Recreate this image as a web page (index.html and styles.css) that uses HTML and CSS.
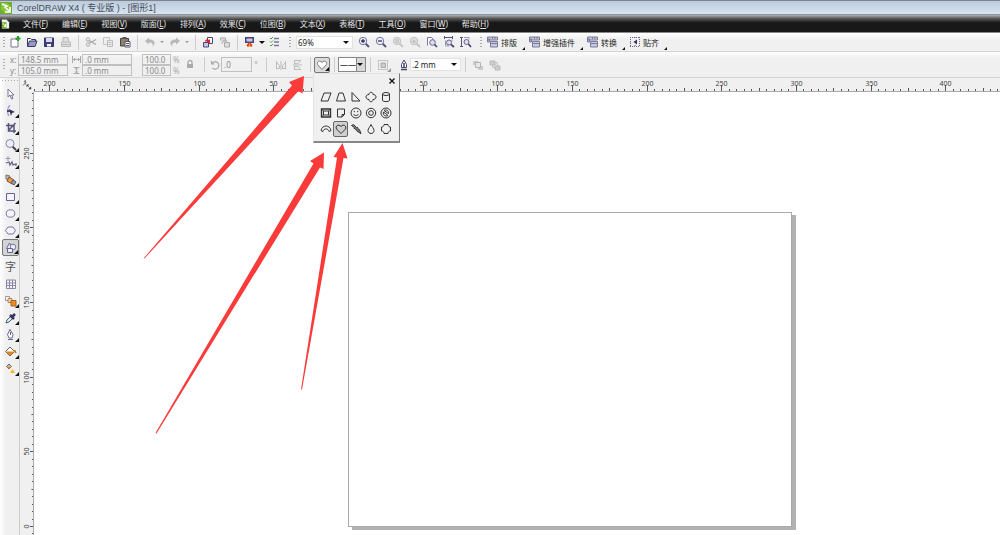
FILE: index.html
```
<!DOCTYPE html>
<html lang="zh-CN">
<head>
    <meta charset="UTF-8">
    <meta name="viewport" content="width=device-width, initial-scale=1.0">
    <title>CorelDRAW X4</title>
    <link rel="stylesheet" href="styles.css">
</head>
<body>
    <div class="app">
        <header class="titlebar">
            <svg class="logo" viewBox="0 0 12 12"><rect width="12" height="12" fill="#6fae2e"/><path d="M1 1h6l4 4v6H5L1 7z" fill="#8cc63f"/><path d="M2 2l5 2-2 1 4 4M10 5v5H5" fill="none" stroke="#fff" stroke-width="1.6"/></svg>
            <span>CorelDRAW X4 ( 专业版 ) - [图形1]</span>
        </header>

        <nav class="menubar">
            <svg class="doc-icon" viewBox="0 0 10 10"><path d="M1 0h5l3 3v7H1z" fill="#eef6e4"/><path d="M1 3h5v7H1z" fill="#6fae2e"/><path d="M2 4l3 4M5 5v3H3" stroke="#fff" fill="none"/></svg>
            <a href="#">文件(<u>F</u>)</a>
            <a href="#">编辑(<u>E</u>)</a>
            <a href="#">视图(<u>V</u>)</a>
            <a href="#">版面(<u>L</u>)</a>
            <a href="#">排列(<u>A</u>)</a>
            <a href="#">效果(<u>C</u>)</a>
            <a href="#">位图(<u>B</u>)</a>
            <a href="#">文本(<u>X</u>)</a>
            <a href="#">表格(<u>T</u>)</a>
            <a href="#">工具(<u>O</u>)</a>
            <a href="#">窗口(<u>W</u>)</a>
            <a href="#">帮助(<u>H</u>)</a>
        </nav>

        <div class="toolbar standard">
            <i class="grip"></i>
            <button class="tool" aria-label="New"><svg viewBox="0 0 12 12"><path d="M2 3h5l2 2v6H2z" fill="#fff" stroke="#77778f"/><path d="M9 0v5M6.500 2.500h5" stroke="#2da12d" stroke-width="2"/></svg></button>
            <button class="tool" aria-label="Open"><svg viewBox="0 0 12 12"><path d="M1.500 10V2.500h3l1 1h4V5" fill="#fff" stroke="#35356b"/><path d="M1.500 10.500L3.500 5H11l-2 5.500z" fill="#9a9ac0" stroke="#35356b"/></svg></button>
            <button class="tool" aria-label="Save"><svg viewBox="0 0 12 12"><path d="M1.500 2h9v8.500h-9z" fill="#44447c" stroke="#35356b"/><path d="M3 2h6v4H3z" fill="#d9d9ee"/><path d="M4 8h4v2.500H4z" fill="#fff"/></svg></button>
            <button class="tool off" aria-label="Print"><svg viewBox="0 0 12 12"><path d="M3 6V1.500h5L9 6M1.500 6h9v4.500h-9zM1.500 8.500h9" fill="#ddd" stroke="#bbb"/></svg></button>
            <i class="sep"></i>
            <button class="tool off" aria-label="Cut"><svg viewBox="0 0 12 12"><circle cx="3" cy="3.500" r="1.700" fill="none" stroke="#aaa"/><circle cx="3" cy="8.500" r="1.700" fill="none" stroke="#aaa"/><path d="M4 4.500l7 4M4 7.500l7-4" stroke="#aaa" stroke-width="1.300"/></svg></button>
            <button class="tool off" aria-label="Copy"><svg viewBox="0 0 12 12"><path d="M1.500 1.500h6v7h-6z" fill="#eee" stroke="#c4c4c4"/><path d="M5.500 4.500h5v6h-5zM6.500 6.500h3M6.500 8.500h3" fill="#eee" stroke="#bbb"/></svg></button>
            <button class="tool" aria-label="Paste"><svg viewBox="0 0 12 12"><path d="M1.500 2.500h8V10h-8z" fill="#8d8270" stroke="#4a4438"/><path d="M3.500 1h4v2h-4z" fill="#555"/><path d="M6 5.500h5V11H6zM7 7.500h3M7 9.500h3" fill="#fff" stroke="#55556e"/></svg></button>
            <i class="sep"></i>
            <button class="tool off" aria-label="Undo"><svg viewBox="0 0 12 12"><path d="M1 5l4-3.500v2c4 0 6 1.500 5.500 4.500L8.500 11C9.500 7.500 8 6.500 5 6.500v2z" fill="#b8b8bc"/></svg></button>
            <button class="drop off" aria-label="Undo list"></button>
            <button class="tool off" aria-label="Redo"><svg viewBox="0 0 12 12"><path d="M11 5L7 1.500v2C3 3.500 1 5 1.500 8l2 3C2.500 7.500 4 6.500 7 6.500v2z" fill="#b8b8bc"/></svg></button>
            <button class="drop off" aria-label="Redo list"></button>
            <i class="sep"></i>
            <button class="tool" aria-label="Import"><svg viewBox="0 0 12 12"><path d="M5.500 1.500h5v6h-5z" fill="#fff" stroke="#44447c"/><path d="M1.500 6.500h5V11h-5z" fill="#c8c8e0" stroke="#44447c"/><path d="M3 5c1-2 3-2 4-1l1-1v4H5l1-1C5 5 4 5 3 6z" fill="#d22"/></svg></button>
            <button class="tool off" aria-label="Export"><svg viewBox="0 0 12 12"><path d="M1.500 4.500V2h5v5M5.500 6.500h5V11h-5z" fill="#ddd" stroke="#aaa"/><path d="M3 8c0-4 3-4 5-3" stroke="#bbb" stroke-width="1.500" fill="none"/></svg></button>
            <i class="sep"></i>
            <button class="tool" aria-label="Application launcher"><svg viewBox="0 0 12 12"><path d="M1 1h9v6H1z" fill="#44447c"/><path d="M2.500 2.500h6v3h-6z" fill="#c8c8e6"/><path d="M5.500 6l3 3-1 2-2-1-2 1-1-2z" fill="#e33c1e"/><path d="M5.500 8v3" stroke="#fb3"/></svg></button>
            <button class="drop" aria-label="Launcher list"></button>
            <button class="tool" aria-label="Options"><svg viewBox="0 0 12 12"><path d="M5 2.500h5M5 6h5M5 9.500h5" stroke="#77779a" stroke-width="1.500"/><path d="M1 2l1 1 2-2M1 5.500l1 1 2-2M1 9l1 1 2-2" fill="none" stroke="#43a047"/></svg></button>
            <i class="grip wide"></i>
            <span class="combo zoom-level"><select aria-label="Zoom level"><option>69%</option></select></span>
            <button class="tool" aria-label="Zoom in"><svg viewBox="0 0 12 12"><path d="M7.500 7.500L11 11" stroke="#55557c" stroke-width="2"/><circle cx="5" cy="5" r="3.700" fill="#eef" stroke="#77779a"/><path d="M3 5h4M5 3v4" stroke="#33335c" stroke-width="1.300"/></svg></button>
            <button class="tool" aria-label="Zoom out"><svg viewBox="0 0 12 12"><path d="M7.500 7.500L11 11" stroke="#55557c" stroke-width="2"/><circle cx="5" cy="5" r="3.700" fill="#eef" stroke="#77779a"/><path d="M3 5h4" stroke="#33335c" stroke-width="1.300"/></svg></button>
            <button class="tool off" aria-label="Zoom to selection"><svg viewBox="0 0 12 12"><path d="M7.500 7.500L11 11" stroke="#c4c4c4" stroke-width="2"/><circle cx="5" cy="5" r="3.700" fill="#ddd" stroke="#c4c4c4"/><path d="M3 4h4M3 6h4" stroke="#bbb"/></svg></button>
            <button class="tool off" aria-label="Zoom to all"><svg viewBox="0 0 12 12"><path d="M7.500 7.500L11 11" stroke="#c4c4c4" stroke-width="2"/><circle cx="5" cy="5" r="3.700" fill="#ddd" stroke="#c4c4c4"/><path d="M3 6.500l2-3 2 3z" fill="#bbb"/></svg></button>
            <button class="tool" aria-label="Zoom to page"><svg viewBox="0 0 12 12"><path d="M1.500 9.500v-8h4l2 2v2" fill="#fff" stroke="#77779a"/><circle cx="6.500" cy="6.500" r="2.800" fill="#dde" stroke="#66668c"/><path d="M8.500 8.500L11 11" stroke="#44447c" stroke-width="1.700"/></svg></button>
            <button class="tool" aria-label="Zoom to page width"><svg viewBox="0 0 12 12"><path d="M1 1.500h9M1.500 0v3M9.500 0v3" stroke="#55557c"/><path d="M2.500 4.500V10H6M9 3.500v2" fill="none" stroke="#9999b4"/><circle cx="6" cy="6.500" r="2.500" fill="#dde" stroke="#66668c"/><path d="M8 8.500l3 2.500" stroke="#44447c" stroke-width="1.700"/></svg></button>
            <button class="tool" aria-label="Zoom to page height"><svg viewBox="0 0 12 12"><path d="M1.500 1v10M0 1.500h3M0 10.500h3" stroke="#55557c"/><path d="M4 1.500h5v2" fill="none" stroke="#9999b4"/><circle cx="6.500" cy="6" r="2.500" fill="#dde" stroke="#66668c"/><path d="M8.500 8l2.500 3" stroke="#44447c" stroke-width="1.700"/></svg></button>
            <i class="grip wide"></i>
            <button class="macro"><svg viewBox="0 0 12 12"><path d="M.5 1h10v3H.5zM.5 3h2v3h-2zM3.500 5.500h7V11h-7z" fill="#c9c9de" stroke="#7a7a9c"/><path d="M3.500 7.500h7M5.500 1v2M8 1v2" stroke="#7a7a9c"/></svg>排版</button>
            <button class="macro"><svg viewBox="0 0 12 12"><path d="M.5 1h10v3H.5zM.5 3h2v3h-2zM3.500 5.500h7V11h-7z" fill="#c9c9de" stroke="#7a7a9c"/><path d="M3.500 7.500h7M5.500 1v2M8 1v2" stroke="#7a7a9c"/></svg>增强插件</button>
            <button class="macro"><svg viewBox="0 0 12 12"><path d="M.5 1h10v3H.5zM.5 3h2v3h-2zM3.500 5.500h7V11h-7z" fill="#c9c9de" stroke="#7a7a9c"/><path d="M3.500 7.500h7M5.500 1v2M8 1v2" stroke="#7a7a9c"/></svg>转换</button>
            <button class="macro"><svg viewBox="0 0 12 12"><path d="M1.500 1v10M1 1.500h10M10.500 1v10M1 10.500h10M6 1v2M6 9v2M1 6h2" fill="none" stroke="#66668c" stroke-dasharray="1 1"/><path d="M8 3.500v5L4.500 6z" fill="#33335c"/></svg>贴齐</button>
        </div>

        <div class="toolbar property">
            <i class="grip"></i>
            <div class="pair position">
                <label for="posX">x:</label><input id="posX" value="148.5 mm" disabled>
                <label for="posY">y:</label><input id="posY" value="105.0 mm" disabled>
            </div>
            <div class="pair size">
                <label for="sizeW"><svg viewBox="0 0 9 7"><path d="M.5 0v7M8.500 0v7M1 3.500h7M3 2L1.500 3.500 3 5M6 2l1.500 1.500L6 5" fill="none" stroke="#aaa"/></svg></label><input id="sizeW" aria-label="Width" value=".0 mm" disabled>
                <label for="sizeH"><svg viewBox="0 0 9 7"><path d="M1.500.5h6M1.500 6.500h6M4.500 1v5M3 2.500L4.500 1 6 2.500M3 4.500L4.500 6 6 4.500" fill="none" stroke="#aaa"/></svg></label><input id="sizeH" aria-label="Height" value=".0 mm" disabled>
            </div>
            <div class="pair scale">
                <input id="scaleX" value="100.0" disabled><label for="scaleX">%</label>
                <input id="scaleY" value="100.0" disabled><label for="scaleY">%</label>
            </div>
            <button class="tool off lock" aria-label="Lock ratio"><svg viewBox="0 0 12 12"><path d="M4 5V3.500a2 2 0 0 1 4 0V5" fill="none" stroke="#aaa" stroke-width="1.300"/><path d="M3 5h6v4H3z" fill="#aaa"/></svg></button>
            <i class="sep wide"></i>
            <label class="angle" for="angle"><svg viewBox="0 0 10 10"><path d="M2 3.500A3.700 3.700 0 1 1 2.500 8M1.500 1v3h3" fill="none" stroke="#aaa" stroke-width="1.200"/></svg></label>
            <input class="angle-input" id="angle" aria-label="Rotation" value=".0" disabled>
            <span class="degree">°</span>
            <i class="sep wide"></i>
            <button class="tool off" aria-label="Mirror horizontally"><svg viewBox="0 0 12 12"><path d="M1.500 2v8M1.500 9.500h3v-3l-3-3M10.500 2v8M10.500 9.500h-3v-3l3-3M6 2v9" fill="none" stroke="#bbb"/></svg></button>
            <button class="tool off" aria-label="Mirror vertically"><svg viewBox="0 0 12 12"><path d="M2 1.500h7M2.500 1.500v3h3l3-2M2 10.500h7M2.500 10.500v-3h3l3 2M1 6h9" fill="none" stroke="#bbb"/></svg></button>
            <i class="sep"></i>
            <div class="shape-picker">
                <button class="shape-button flyout" aria-label="Perfect shapes" aria-expanded="true"><svg viewBox="0 0 12 12"><path d="M6 10.500L1.500 5.500C.5 3 3.500.500 6 3.500 8.500.500 11.500 3 10.500 5.500z" fill="#fff" stroke="#77778f"/></svg></button>
                <div class="shape-popup">
                    <button class="close" aria-label="Close"><svg viewBox="0 0 6 6"><path d="M.5.5l5 5M5.500.500l-5 5" stroke="#111" stroke-width="1.300"/></svg></button>
                    <div class="shape-grid">
                        <button aria-label="Parallelogram"><svg viewBox="0 0 12 12"><path d="M4 2h7L8 10H1z"/></svg></button>
                        <button aria-label="Trapezoid"><svg viewBox="0 0 12 12"><path d="M4 2h4l2.500 8h-9z"/></svg></button>
                        <button aria-label="Triangle"><svg viewBox="0 0 12 12"><path d="M2 1.500V10h8z"/></svg></button>
                        <button aria-label="Cross"><svg viewBox="0 0 12 12"><path d="M4 3.500c0-3 4-3 4 0 4 0 4 5 0 5 0 3-4 3-4 0-4 0-4-5 0-5z"/></svg></button>
                        <button aria-label="Cylinder"><svg viewBox="0 0 12 12"><path d="M2.500 3v6.500c1 1.500 6 1.500 7 0V3"/><ellipse cx="6" cy="3" rx="3.500" ry="1.500"/></svg></button>
                        <button aria-label="Frame"><svg viewBox="0 0 12 12"><path d="M1.500 2h9v8h-9z" stroke-width="1.400"/><path d="M3.500 4h5v4h-5zM1.500 2l2 2M10.500 2l-2 2M1.500 10l2-2M10.500 10l-2-2"/></svg></button>
                        <button aria-label="Note"><svg viewBox="0 0 12 12"><path d="M2.500 2h7v5.500L7 10H2.500zM7 10V7.500h2.500"/></svg></button>
                        <button aria-label="Smiley"><svg viewBox="0 0 12 12"><circle cx="6" cy="6" r="5"/><path d="M3.500 7c1 2 4 2 5 0M4.300 3.800v1.400M7.700 3.800v1.400"/></svg></button>
                        <button aria-label="Donut"><svg viewBox="0 0 12 12"><circle cx="6" cy="6" r="4.700"/><circle cx="6" cy="6" r="2.300"/></svg></button>
                        <button aria-label="Forbidden"><svg viewBox="0 0 12 12"><circle cx="6" cy="6" r="5"/><path d="M4 3.500c2-1.500 5 0 4.500 3zM3.500 5c-1 3 2 5 4.500 3.500z"/></svg></button>
                        <button aria-label="Arc"><svg viewBox="0 0 12 12"><path d="M1 7.500C2 1.500 10 1.500 11 7.500L9 8.500C8 5 4 5 3 8.500z"/></svg></button>
                        <button class="selected" aria-label="Heart"><svg viewBox="0 0 12 12"><path d="M6 10.500L1.500 6C0 3 3.500.500 6 3.500 8.500.500 12 3 10.500 6z"/></svg></button>
                        <button aria-label="Bolt"><svg viewBox="0 0 12 12"><path d="M1.500 2.500l2-1 3 3 .5-.5 2 3 .5-.3 1.500 4-4.500-3 .5-.5-3-2 .5-.5z" fill="#888"/></svg></button>
                        <button aria-label="Drop"><svg viewBox="0 0 12 12"><path d="M6 1.500C5 4 3 5.500 3 7.500c0 4 6 4 6 0C9 5.500 7 4 6 1.500z"/></svg></button>
                        <button aria-label="Plaque"><svg viewBox="0 0 12 12"><path d="M4 1.500h4c0 1.500 1 2.500 2.500 2.500v4C9 8 8 9 8 10.500H4C4 9 3 8 1.500 8V4C3 4 4 3 4 1.500z"/></svg></button>
                    </div>
                </div>
            </div>
            <i class="sep"></i>
            <span class="combo line-style"><select aria-label="Outline style"><option>——</option></select></span>
            <i class="sep"></i>
            <button class="tool off flyout wrap" aria-label="Wrap text"><svg viewBox="0 0 12 12"><path d="M1.500 1v10M1 1.500h10M10.500 1v10M1 10.500h10" stroke="#c4c4c4"/><path d="M4 4h4.500v4.500H4z" fill="#ccc" stroke="#aaa"/></svg></button>
            <i class="sep blank"></i>
            <label class="pen" for="outline"><svg viewBox="0 0 10 12"><path d="M5 1L2.500 5.500v3h5v-3z" fill="#fff" stroke="#44446c"/><path d="M2 10.500h6M5 4v4" stroke="#44446c" stroke-width="1.500"/></svg></label>
            <span class="combo outline"><select id="outline" aria-label="Outline width"><option>.2 mm</option></select></span>
            <i class="sep"></i>
            <button class="tool off" aria-label="To front"><svg viewBox="0 0 12 12"><path d="M1 2h5v4H1z" fill="#ccc"/><path d="M6 7h5v4H6z" fill="#ccc"/><path d="M3.500 3.500h5v5h-5z" fill="#e8e8e8" stroke="#b4b4b4"/></svg></button>
            <button class="tool off" aria-label="To back"><svg viewBox="0 0 12 12"><path d="M3.500 3.500h5v5h-5z" fill="#e8e8e8" stroke="#c4c4c4"/><path d="M1 2h5v4H1zM6 7h5v4H6z" fill="#ccc" stroke="#bbb"/></svg></button>
        </div>

        <main class="workspace">
            <div class="toolbox">
                <div class="group">
                    <button class="tool" aria-label="Pick"><svg viewBox="0 0 12 12"><path d="M3 1v8l2-2 1.500 4L8 10.500 6.500 7H9z" fill="#fff" stroke="#77779a"/></svg></button>
                    <button class="tool flyout" aria-label="Shape"><svg viewBox="0 0 12 12"><path d="M5 0C2 3 2 8 4 11" fill="none" stroke="#9999c0" stroke-width="1.300"/><path d="M4 4l6 3-3 1-1 3z" fill="#33335c"/><path d="M2 5h3v2H2z" fill="#44446c"/></svg></button>
                    <button class="tool flyout" aria-label="Crop"><svg viewBox="0 0 12 12"><path d="M3.500 1v8H11M1 3.500h8V11M10.500 1L4 8" fill="none" stroke="#55557c" stroke-width="1.500"/></svg></button>
                    <button class="tool flyout" aria-label="Zoom"><svg viewBox="0 0 12 12"><path d="M7 7l4 4" stroke="#444" stroke-width="2"/><circle cx="5" cy="4.500" r="4" fill="#eef" stroke="#88889c"/></svg></button>
                    <button class="tool flyout" aria-label="Freehand"><svg viewBox="0 0 12 12"><path d="M3 0v5M.500 2.500h5" stroke="#9999b4"/><path d="M1 7l3-1 1 3 2-3 1 3 3-1v2" fill="none" stroke="#66668c" stroke-width="1.300"/></svg></button>
                </div>
                <div class="group">
                    <button class="tool flyout" aria-label="Smart fill"><svg viewBox="0 0 12 12"><path d="M1 1l4 1-1 4-3-1z" fill="#bbb" stroke="#777"/><path d="M4 3l5 3-2 4-5-3z" fill="#f39a32" stroke="#77573c"/><path d="M8 6l3 2-2 3-3-2z" fill="#99a" stroke="#556"/></svg></button>
                    <button class="tool flyout" aria-label="Rectangle"><svg viewBox="0 0 12 12"><path d="M1.500 2.500h8v7h-8z" fill="#f4f4ff" stroke="#66668c"/></svg></button>
                    <button class="tool flyout" aria-label="Ellipse"><svg viewBox="0 0 12 12"><ellipse cx="5.500" cy="5.500" rx="4.300" ry="3.700" fill="#f4f4ff" stroke="#77779a"/></svg></button>
                    <button class="tool flyout" aria-label="Polygon"><svg viewBox="0 0 12 12"><path d="M3 2h5l2.500 3.500L8 9H3L.5 5.500z" fill="#f4f4ff" stroke="#77779a"/></svg></button>
                    <button class="tool flyout selected" aria-label="Basic shapes"><svg viewBox="0 0 12 12"><path d="M1.500 6.500L4.500 1l3 5.500z" fill="#eef" stroke="#66668c"/><circle cx="8" cy="5" r="2.800" fill="#eef" stroke="#77779a"/><path d="M2.500 6.500h5v4h-5z" fill="#eef" stroke="#66668c"/></svg></button>
                </div>
                <div class="group">
                    <button class="tool text-tool" aria-label="Text">字</button>
                </div>
                <div class="group">
                    <button class="tool" aria-label="Table"><svg viewBox="0 0 12 12"><path d="M1.500 2h9v8.500h-9zM1.500 5h9M1.500 7.500h9M4.500 2v8.500M7.500 2v8.500" fill="#f8f8ff" stroke="#8888a4"/></svg></button>
                    <button class="tool flyout" aria-label="Blend"><svg viewBox="0 0 12 12"><path d="M.5 1.500h4v4h-4z" fill="#fff" stroke="#999"/><path d="M3 3.500h4v4H3z" fill="#ffd27a" stroke="#a87"/><path d="M6 5.500h5V11H6z" fill="#f08a1d" stroke="#a5622a"/></svg></button>
                    <button class="tool flyout" aria-label="Eyedropper"><svg viewBox="0 0 12 12"><path d="M1 11l1-3 4-4 2 2-4 4z" fill="#d9eef2" stroke="#557"/><path d="M5 3l4 4M7 5l3-3" stroke="#33335c" stroke-width="2.500"/></svg></button>
                    <button class="tool flyout" aria-label="Outline"><svg viewBox="0 0 12 12"><path d="M5 .5L2.500 5.500 4 9h3l1-3.500z" fill="#fff" stroke="#66668c"/><path d="M3 10.500h5M5.500 3v3" stroke="#66668c"/></svg></button>
                    <button class="tool flyout" aria-label="Fill"><svg viewBox="0 0 12 12"><path d="M5 1l4.500 4.500L5 10 .5 5.500z" fill="#fff" stroke="#665"/><path d="M1 5.500h8L5 9.500z" fill="#e8801a"/><path d="M9.500 4l1.500 3" stroke="#c70" stroke-width="1.500"/></svg></button>
                    <button class="tool flyout" aria-label="Interactive fill"><svg viewBox="0 0 12 12"><path d="M4 1l2.500 2.500L4 6 1.500 3.500z" fill="#bbb" stroke="#666"/><path d="M2 4h4L4 6z" fill="#e8801a"/><path d="M5 10l2.500-4L10 10z" fill="#fbb52c"/></svg></button>
                </div>
            </div>

            <div class="drawing">
                <div class="origin"><svg viewBox="0 0 12 12"><path d="M2 2h3M3.500 0v5M1 6l4-4M6 6l3 3" stroke="#555" stroke-dasharray="2 1"/><path d="M5 5h3L5 8zM10 10H7l3-3z" fill="#333"/></svg></div>
                <svg class="ruler ruler-h" id="rulerH"></svg>
                <svg class="ruler ruler-v" id="rulerV"></svg>
                <div class="canvas">
                    <div class="page"></div>
                </div>
            </div>
        </main>

        <svg class="arrows">
            <path d="M143.500 258.500L292 85.500l-3-3.500L304 76l-1.500 17.500-4-2.500L144.500 258.500z"/>
            <path d="M155.500 433L313.500 163.500l-3.500-2.500L324 152.500l-.5 16.500-3.500-1.500L156.500 433.500z"/>
            <path d="M301 389.500L337 157.500l-3.500-.5 9-14 5 15.500-4-.5L302 389.500z"/>
        </svg>
    </div>

    <script src="ruler.js"></script>
</body>
</html>
```
FILE: styles.css
```
* {
    box-sizing: border-box;
}
body {
    margin: 0;
    font-family: "Noto Sans", "Noto Sans CJK SC", sans-serif;
    font-size: 8px;
    color: #222;
}
button, input, select {
    font: inherit;
    color: inherit;
    margin: 0;
    padding: 0;
    border: none;
    background: none;
}
svg {
    display: block;
}
.app {
    position: relative;
    display: flex;
    flex-direction: column;
    height: 100vh;
    overflow: hidden;
    background: #f0f0f0;
}

/* title and menu */
.titlebar {
    display: flex;
    align-items: center;
    gap: 5px;
    height: 15px;
    border-top: 1px solid #7d8591;
    border-bottom: 1px solid #8c949e;
    background: linear-gradient(#bccadb, #d7e4f1);
    font-family: "Liberation Sans", "Noto Sans CJK SC", sans-serif;
    font-size: 9px;
    color: #444c58;
}
.logo {
    width: 12px;
    height: 12px;
}
.menubar {
    display: flex;
    align-items: center;
    gap: 14px;
    height: 18px;
    padding: 0 1px;
    border-bottom: 1px solid #888;
    background: linear-gradient(#b4b4b4, #5a5a5a 20%, #181818 45%);
}
.menubar a {
    color: #e4e4e4;
    text-decoration: none;
    white-space: nowrap;
}
.doc-icon {
    width: 9px;
    height: 10px;
    margin-right: -1px;
}

/* toolbars */
.toolbar {
    display: flex;
    align-items: center;
    padding-left: 2px;
    border-bottom: 1px solid #d4d4d4;
    background: linear-gradient(#fff, #f0f0f0 6px);
}
.standard {
    height: 19px;
}
.property {
    height: 26px;
}
.grip {
    width: 4px;
    height: 13px;
    flex: none;
    background: radial-gradient(circle, #aaa 1px, transparent 1px) 0 0 / 4px 3px;
}
.grip.wide {
    margin: 0 4px 0 5px;
}
.sep {
    width: 8px;
    height: 15px;
    flex: none;
    background: linear-gradient(#ccc, #ccc) center / 1px 100% no-repeat;
}
.sep.wide {
    width: 12px;
}
.sep.blank {
    background: none;
}
.tool {
    position: relative;
    display: flex;
    align-items: center;
    justify-content: center;
    width: 17px;
    height: 17px;
    flex: none;
}
.tool svg {
    width: 12px;
    height: 12px;
}
.flyout::after,
.macro::after {
    content: "";
    position: absolute;
    right: 0;
    bottom: 1px;
    border-left: 4px solid transparent;
    border-bottom: 4px solid #111;
}
.flyout.off::after {
    border-bottom-color: #999;
}
.drop {
    display: flex;
    justify-content: center;
    width: 8px;
}
.drop::after,
.combo::after {
    content: "";
    border: 3px solid transparent;
    border-top-color: #111;
    border-bottom: none;
}
.drop.off::after {
    border-width: 2px;
    border-top-color: #999;
    border-bottom: none;
}
.combo {
    display: flex;
    align-items: center;
    height: 13px;
    padding-right: 3px;
    border: 1px solid #e2e2e2;
    background: #fff;
}
.combo select {
    flex: 1;
    min-width: 0;
    appearance: none;
    padding-left: 1px;
    outline: none;
}
.zoom-level {
    width: 57px;
    margin-right: 2px;
}
.macro {
    position: relative;
    display: flex;
    align-items: center;
    gap: 2px;
    height: 17px;
    padding-right: 8px;
    margin-right: 4px;
    white-space: nowrap;
}
.macro svg {
    width: 12px;
    height: 12px;
}
.macro::after {
    border-left-width: 3px;
    border-bottom-width: 3px;
}

/* property bar */
.pair {
    display: grid;
    align-items: center;
    color: #888;
}
.pair input,
.angle-input {
    width: 100%;
    height: 11px;
    padding-left: 2px;
    border: 1px solid #c0c0c0;
    color: #888;
}
.position {
    grid-template-columns: 8px 50px;
    margin-left: 4px;
}
.size {
    grid-template-columns: 10px 50px;
    margin-left: 4px;
}
.size svg {
    width: 9px;
    height: 7px;
}
.scale {
    grid-template-columns: 29px 8px;
    column-gap: 2px;
    margin-left: 10px;
}
.scale label {
    color: #aaa;
}
.angle svg {
    width: 10px;
    height: 10px;
}
.angle {
    margin-right: 1px;
}
.angle-input {
    width: 31px;
    height: 15px;
}
.degree {
    width: 8px;
    text-align: center;
    color: #999;
}
.shape-picker {
    position: relative;
}
.shape-button {
    position: relative;
    display: grid;
    place-items: center;
    width: 16px;
    height: 16px;
    border: 1px solid #777;
    border-radius: 2px;
    background: #dcdcdc;
}
.shape-button svg {
    width: 12px;
    height: 12px;
}
.line-style {
    width: 28px;
    height: 15px;
    padding-right: 2px;
    border: 1px solid #888;
    background: linear-gradient(90deg, #fff 17px, #888 17px, #888 18px, #d8d8d8 18px);
}
.line-style::after {
    border-width: 3px 3px 0;
}
.pen svg {
    width: 10px;
    height: 12px;
}
.outline {
    width: 51px;
    margin-left: 1px;
}

/* shape flyout */
.shape-popup {
    position: absolute;
    z-index: 2;
    top: 100%;
    left: -1px;
    width: 87px;
    padding: 4px;
    border: 1px solid #e4e4e4;
    border-right: 1px solid #777;
    border-bottom: 2px solid #888;
    background: #f0f0f0;
}
.close {
    display: block;
    margin-left: auto;
    margin-bottom: 5px;
}
.close svg {
    width: 6px;
    height: 6px;
}
.shape-grid {
    display: grid;
    grid-template-columns: repeat(5, 15px);
    grid-auto-rows: 16px;
}
.shape-grid button {
    display: grid;
    place-items: center;
}
.shape-grid svg {
    width: 12px;
    height: 12px;
    fill: none;
    stroke: #333;
}
.shape-grid .selected {
    border: 1px solid #666;
    border-radius: 2px;
    background: #d0d0d0;
}

/* workspace */
.workspace {
    display: flex;
    flex: 1;
    min-height: 0;
}
.toolbox {
    width: 20px;
    padding: 7px 1px 0 2px;
    flex: none;
    border-right: 1px solid #ccc;
    background: radial-gradient(circle, #aaa 1px, transparent 1px) 4px 1px / 3px 3px repeat-x, linear-gradient(90deg, #fff, #f0f0f0 6px);
}
.group + .group {
    margin-top: 1px;
}
.toolbox .selected {
    border: 1px solid #777;
    border-radius: 2px;
    background: #d4d4d4;
}
.text-tool {
    font-size: 11px;
    color: #555;
}
.drawing {
    display: grid;
    grid-template-columns: 14px 1fr;
    grid-template-rows: 14px 1fr;
    flex: 1;
    min-width: 0;
}
.origin {
    padding: 2px 0 0 2px;
}
.origin svg {
    width: 11px;
    height: 11px;
}
.ruler {
    width: 100%;
    height: 100%;
    fill: #444;
    stroke: none;
}
.ruler line {
    stroke: #555;
}
.ruler text {
    font-size: 7px;
    text-anchor: middle;
}
.ruler-h {
    border-bottom: 1px solid #aaa;
}
.ruler-v {
    border-right: 1px solid #aaa;
}
.canvas {
    position: relative;
    overflow: hidden;
    background: #fff;
}
.page {
    position: absolute;
    left: 314px;
    top: 120px;
    width: 444px;
    height: 315px;
    border: 1px solid #aaa;
    background: #fff;
    box-shadow: 4px 3px #b2b2b2;
}
.arrows {
    position: absolute;
    inset: 0;
    width: 100%;
    height: 100%;
    fill: #fb3a3a;
    pointer-events: none;
}
```
FILE: ruler.js
```
const SVG_NS = 'http://www.w3.org/2000/svg';
const MM = 1.493; // pixels per millimetre at 69%

function add(parent, name, attrs, text) {
    const el = document.createElementNS(SVG_NS, name);
    Object.keys(attrs).forEach(key => el.setAttribute(key, attrs[key]));
    if (text !== undefined) el.textContent = text;
    parent.appendChild(el);
}

// zero is the pixel position of 0 mm, dir is the direction of growing values
function drawRuler(svg, vertical, zero, dir) {
    const length = vertical ? svg.clientHeight : svg.clientWidth;
    for (let mm = -500; mm <= 800; mm += 5) {
        const p = Math.round(zero + dir * mm * MM) + 0.5;
        if (p < 0 || p > length) continue;
        const major = mm % 50 === 0;
        const size = major ? 6 : mm % 25 === 0 ? 3 : 2;
        if (vertical) {
            add(svg, 'line', { x1: 13 - size / 2, x2: 13, y1: p, y2: p });
        } else {
            add(svg, 'line', { x1: p, x2: p, y1: 13 - size, y2: 13 });
        }
        if (major && vertical) {
            add(svg, 'text', { x: 0, y: 0, transform: `translate(9 ${p}) rotate(-90)` }, Math.abs(mm));
        } else if (major) {
            add(svg, 'text', { x: p, y: 8 }, Math.abs(mm));
        }
    }
}

drawRuler(document.getElementById('rulerH'), false, 314, 1);
drawRuler(document.getElementById('rulerV'), true, 434, -1);
```
